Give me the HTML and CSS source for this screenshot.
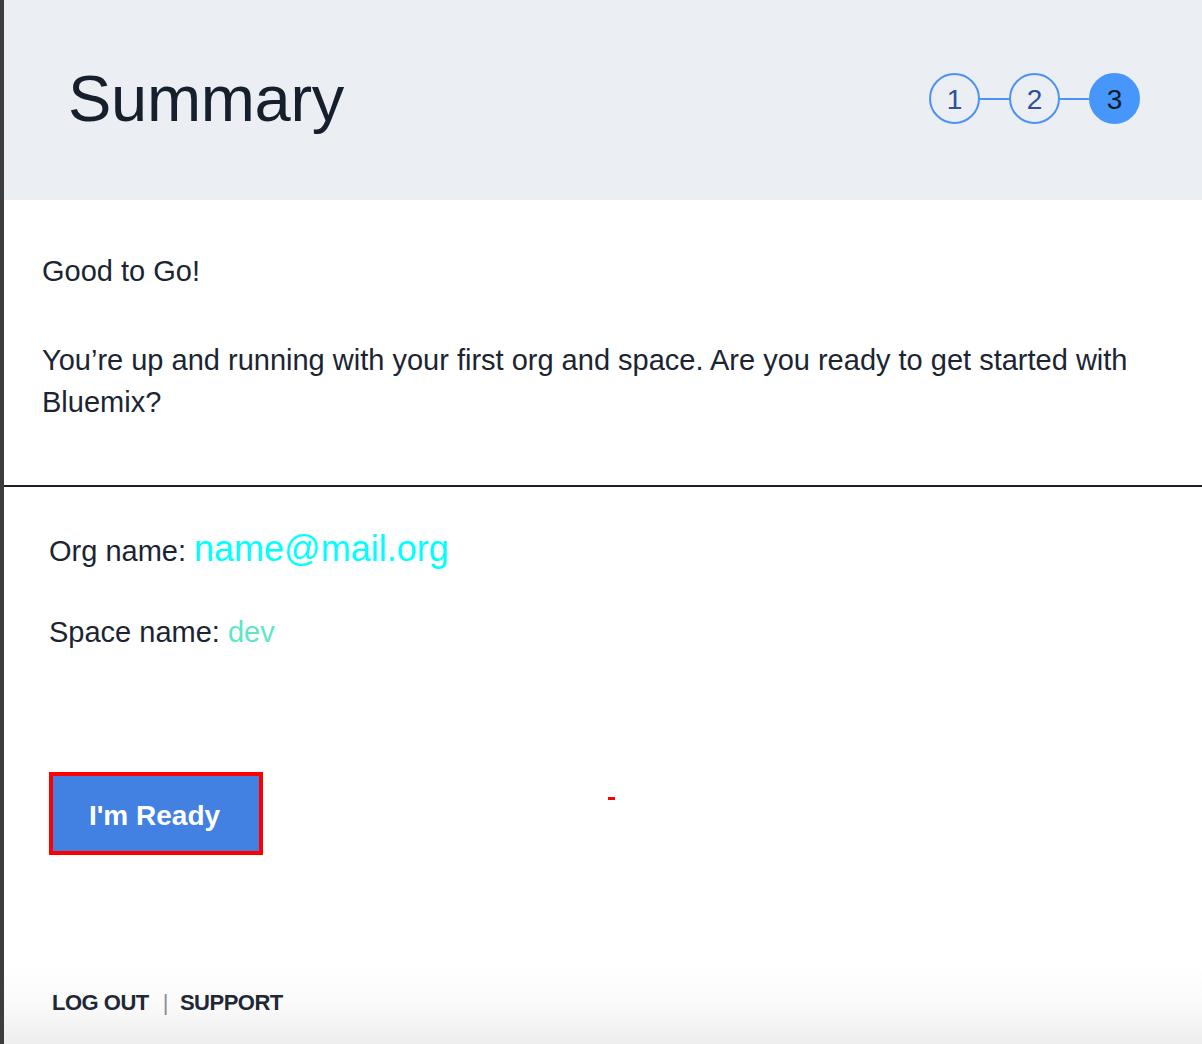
FILE: index.html
```html
<!DOCTYPE html>
<html lang="en">
<head>
<meta charset="utf-8">
<title>Summary</title>
<link rel="stylesheet" href="styles.css">
</head>
<body>
<div class="page">
  <header class="header">
    <h1 class="title">Summary</h1>
    <div class="steps">
      <span class="step">1</span>
      <span class="connector"></span>
      <span class="step">2</span>
      <span class="connector"></span>
      <span class="step step-active">3</span>
    </div>
  </header>

  <section class="intro">
    <p class="lead">Good to Go!</p>
    <p class="text">You’re up and running with your first org and space. Are you ready to get started with Bluemix?</p>
  </section>

  <section class="details">
    <div class="row row-org">Org name: <span class="org-value">name@mail.org</span></div>
    <div class="row row-space">Space name: <span class="space-value">dev</span></div>
    <div class="actions">
      <button class="ready-btn" type="button">I'm Ready</button>
      <span class="dash"></span>
    </div>
  </section>

  <footer class="footer">
    <a class="foot-link" href="#">LOG OUT</a>
    <span class="sep">|</span>
    <a class="foot-link" href="#">SUPPORT</a>
  </footer>
</div>
</body>
</html>
```

FILE: styles.css
```css
* { box-sizing: border-box; }

html, body {
  margin: 0;
  padding: 0;
  height: 100%;
}

body {
  font-family: "Liberation Sans", Arial, sans-serif;
  color: #1b2532;
  background: #ffffff;
  overflow: hidden;
}

.page {
  min-height: 1044px;
  height: 1044px;
  border-left: 4px solid #3d3d3d;
  display: flex;
  flex-direction: column;
}

.header {
  height: 200px;
  flex: 0 0 200px;
  background: #ebeef3;
  display: flex;
  align-items: flex-start;
  justify-content: space-between;
  padding: 0 62px 0 64px;
}

.title {
  margin: 0;
  font-weight: 400;
  font-size: 65px;
  line-height: 66px;
  padding-top: 66px;
  color: #16202c;
  letter-spacing: -0.3px;
}

.steps {
  display: flex;
  align-items: center;
  margin-top: 73px;
}

.step {
  width: 51px;
  height: 51px;
  border: 2px solid #4a92f6;
  border-radius: 50%;
  display: flex;
  align-items: center;
  justify-content: center;
  font-size: 28px;
  color: #2d4f9c;
  line-height: 1;
  padding-top: 2px;
}

.step-active {
  background: #4796fb;
  border-color: #4796fb;
  color: #0e1a2a;
}

.connector {
  width: 29px;
  height: 2px;
  background: #4a92f6;
}

.intro {
  padding: 50px 60px 62px 38px;
}

.lead,
.text {
  margin: 0;
  font-size: 29px;
  line-height: 42px;
  letter-spacing: 0;
}

.text {
  margin-top: 47px;
}

.details {
  border-top: 2px solid #1a2129;
  padding: 41px 0 0 45px;
}

.row {
  font-size: 29px;
  line-height: 42px;
  letter-spacing: 0;
}

.org-value {
  font-size: 36px;
  line-height: 42px;
  color: #00ffff;
  letter-spacing: 0;
  margin-left: 0;
}

.row-space {
  margin-top: 39px;
}

.space-value {
  color: #5de6c8;
}

.actions {
  display: flex;
  align-items: flex-start;
  margin-top: 119px;
}

.ready-btn {
  width: 214px;
  height: 83px;
  border: 4px solid #ff0000;
  background: #4281e2;
  color: #ffffff;
  font-family: "Liberation Sans", Arial, sans-serif;
  font-weight: 700;
  font-size: 28px;
  padding: 5px 3px 0 0;
  cursor: pointer;
}

.dash {
  width: 7px;
  height: 3px;
  background: #ff0000;
  margin: 25px 0 0 345px;
}

.footer {
  margin-top: auto;
  height: 79px;
  flex: 0 0 79px;
  background: linear-gradient(to bottom, #ffffff 0%, #fafafa 50%, #eeeeee 100%);
  display: flex;
  align-items: center;
  padding: 0 0 4px 48px;
  font-size: 22px;
  font-weight: 700;
  letter-spacing: -0.5px;
}

.foot-link {
  color: #1e2935;
  text-decoration: none;
}

.sep {
  color: #8a8f96;
  font-weight: 400;
  margin: 0 12px 0 14px;
}
```
